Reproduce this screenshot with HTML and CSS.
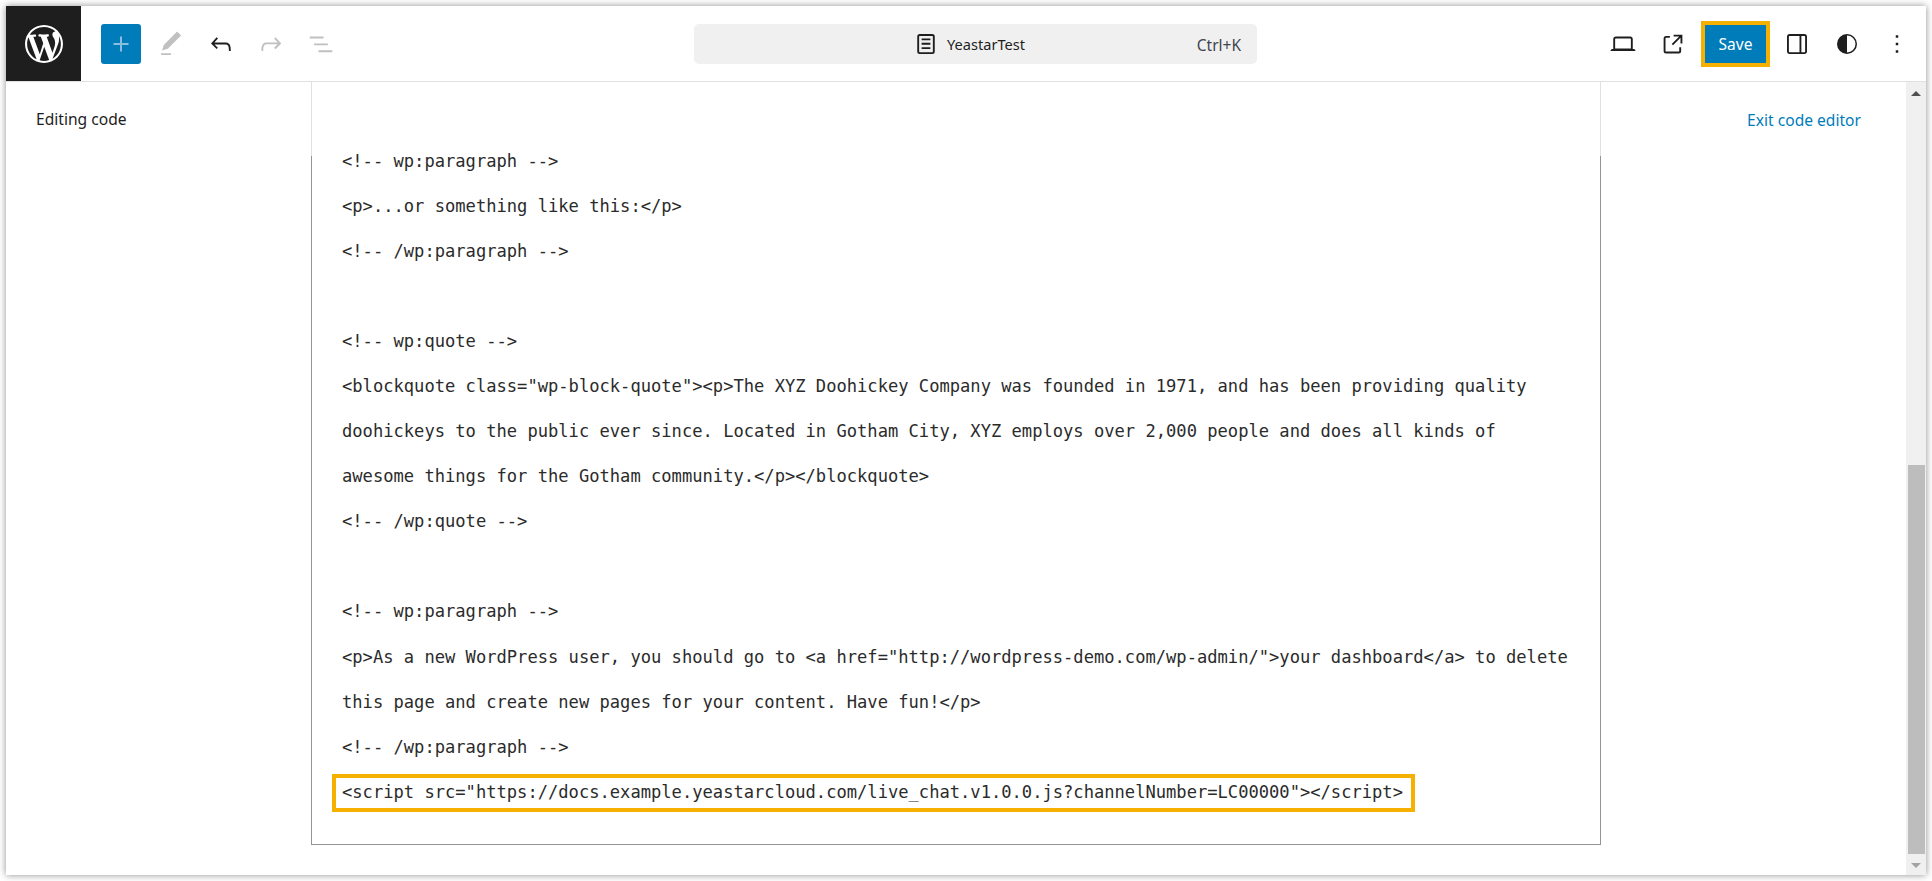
FILE: index.html
```html
<!DOCTYPE html>
<html lang="en">
<head>
<meta charset="utf-8">
<title>YeastarTest</title>
<link rel="stylesheet" href="styles.css">
</head>
<body>
<div class="window">
  <header class="topbar">
    <div class="logo"><svg viewBox="0 0 20 20" width="38" height="38"><path fill="#fff" d="M20 10c0-5.51-4.49-10-10-10C4.48 0 0 4.49 0 10c0 5.52 4.48 10 10 10 5.51 0 10-4.48 10-10zM7.78 15.37L4.37 6.22c.55-.02 1.17-.08 1.17-.08.5-.06.44-1.13-.06-1.11 0 0-1.45.11-2.37.11-.18 0-.37 0-.58-.01C4.12 2.69 6.87 1.11 10 1.11c2.33 0 4.45.87 6.05 2.34-.68-.11-1.65.39-1.65 1.58 0 .74.45 1.36.9 2.1.35.61.55 1.36.55 2.46 0 1.49-1.4 5-1.4 5l-3.03-8.37c.54-.02.82-.17.82-.17.5-.05.44-1.25-.06-1.22 0 0-1.44.12-2.38.12-.87 0-2.33-.12-2.33-.12-.5-.03-.56 1.2-.06 1.22l.92.08 1.26 3.41zM17.41 10c.24-.64.74-1.87.43-4.25.7 1.29 1.05 2.71 1.05 4.25 0 3.29-1.73 6.24-4.4 7.78.97-2.59 1.94-5.2 2.92-7.78zM6.1 18.09C3.12 16.65 1.11 13.53 1.11 10c0-1.3.23-2.48.72-3.59C3.25 10.3 4.67 14.2 6.1 18.09zm4.03-6.63l2.58 6.98c-.86.29-1.76.45-2.71.45-.79 0-1.57-.11-2.29-.33.81-2.38 1.62-4.74 2.42-7.1z"/></svg></div>
    <div class="tools-left">
      <button class="inserter"><svg class="ico" viewBox="0 0 24 24"><path d="M18 11.2h-5.2V6h-1.6v5.2H6v1.6h5.2V18h1.6v-5.2H18z"/></svg></button>
      <span class="tool muted"><svg class="ico" viewBox="0 0 24 24"><path d="M20.1 5.1L16.9 2 6.2 12.7l-1.3 4.4 4.5-1.3L20.1 5.1zM4 20.8h8v-1.5H4v1.5z"/></svg></span>
      <span class="tool"><svg class="ico" viewBox="0 0 24 24"><path d="M18.3 11.7c-.6-.6-1.4-.9-2.3-.9H6.7l2.9-3.3-1.1-1-4.5 5L8.5 16l1-1-2.7-2.7H16c.5 0 .9.2 1.3.5 1 1 1 3.4 1 4.5v.3h1.5v-.2c0-1.5 0-4.3-1.5-5.7z"/></svg></span>
      <span class="tool muted"><svg class="ico" viewBox="0 0 24 24"><path d="M15.6 6.5l-1.1 1 2.9 3.3H8c-.9 0-1.7.3-2.3.9-1.4 1.5-1.4 4.2-1.4 5.6v.2h1.5v-.3c0-1.1 0-3.5 1-4.5.3-.3.7-.5 1.3-.5h9.2L14.5 15l1.1 1.1 4.6-4.6-4.6-5z"/></svg></span>
      <span class="tool muted"><svg class="ico" viewBox="0 0 24 24"><path d="M3 6h11v1.5H3V6zm3.5 5.5h11V13h-11v-1.5zM21 17H10v1.5h11V17z"/></svg></span>
    </div>
    <div class="center-slot">
      <div class="command">
        <div class="doc-title">
          <svg class="ico" viewBox="0 0 24 24"><path d="M15.5 7.5h-7V9h7V7.5Zm-7 3.5h7v1.5h-7V11Zm7 3.5h-7V16h7v-1.5Z"/><path fill-rule="evenodd" d="M17 4H7a2 2 0 0 0-2 2v12a2 2 0 0 0 2 2h10a2 2 0 0 0 2-2V6a2 2 0 0 0-2-2Zm0 1.5H7a.5.5 0 0 0-.5.5v12a.5.5 0 0 0 .5.5h10a.5.5 0 0 0 .5-.5V6a.5.5 0 0 0-.5-.5Z"/></svg>
          <span>YeastarTest</span>
        </div>
        <span class="shortcut">Ctrl+K</span>
      </div>
    </div>
    <div class="tools-right">
      <span class="tool"><svg class="ico" viewBox="0 0 24 24"><path d="M20.5 16h-.7V8c0-1.1-.9-2-2-2H6.2c-1.1 0-2 .9-2 2v8h-.7c-.8 0-1.5.7-1.5 1.5h20c0-.8-.7-1.5-1.5-1.5zM5.7 8c0-.3.2-.5.5-.5h11.6c.3 0 .5.2.5.5v7.6H5.7V8z"/></svg></span>
      <span class="tool"><svg class="ico" viewBox="0 0 24 24"><path d="M19.5 4.5h-7V6h4.44l-5.97 5.97 1.06 1.06L18 7.06v4.44h1.5v-7Zm-13 1a2 2 0 0 0-2 2v10a2 2 0 0 0 2 2h10a2 2 0 0 0 2-2v-3H17v3a.5.5 0 0 1-.5.5h-10a.5.5 0 0 1-.5-.5v-10a.5.5 0 0 1 .5-.5h3V5.5h-3Z"/></svg></span>
      <button class="save">Save</button>
      <span class="tool"><svg class="ico" viewBox="0 0 24 24"><path d="M18 4H6c-1.1 0-2 .9-2 2v12c0 1.1.9 2 2 2h12c1.1 0 2-.9 2-2V6c0-1.1-.9-2-2-2zm-4 14.5H6c-.3 0-.5-.2-.5-.5V6c0-.3.2-.5.5-.5h8v13zm4.5-.5c0 .3-.2.5-.5.5h-2.5v-13H18c.3 0 .5.2.5.5v12z"/></svg></span>
      <span class="tool"><svg class="ico" viewBox="0 0 24 24"><path fill-rule="evenodd" d="M12 4a8 8 0 1 0 0 16 8 8 0 0 0 0-16Zm0 1.2a6.8 6.8 0 0 1 0 13.6V5.2Z"/></svg></span>
      <span class="tool"><svg class="ico" viewBox="0 0 24 24"><path d="M13 19h-2v-2h2v2zm0-6h-2v-2h2v2zm0-6h-2V5h2v2z"/></svg></span>
    </div>
  </header>
  <div class="main">
    <div class="canvas">
      <div class="code-bar">
        <span class="editing">Editing code</span>
        <div class="bar-center"></div>
        <a class="exit">Exit code editor</a>
      </div>
      <div class="code-box">
        <div class="code first">&lt;!-- wp:paragraph --&gt;</div>
        <div class="code">&lt;p&gt;...or something like this:&lt;/p&gt;</div>
        <div class="code">&lt;!-- /wp:paragraph --&gt;</div>
        <div class="code"></div>
        <div class="code">&lt;!-- wp:quote --&gt;</div>
        <div class="code">&lt;blockquote class="wp-block-quote"&gt;&lt;p&gt;The XYZ Doohickey Company was founded in 1971, and has been providing quality</div>
        <div class="code">doohickeys to the public ever since. Located in Gotham City, XYZ employs over 2,000 people and does all kinds of</div>
        <div class="code">awesome things for the Gotham community.&lt;/p&gt;&lt;/blockquote&gt;</div>
        <div class="code">&lt;!-- /wp:quote --&gt;</div>
        <div class="code"></div>
        <div class="code">&lt;!-- wp:paragraph --&gt;</div>
        <div class="code">&lt;p&gt;As a new WordPress user, you should go to &lt;a href="http://wordpress-demo.com/wp-admin/"&gt;your dashboard&lt;/a&gt; to delete</div>
        <div class="code">this page and create new pages for your content. Have fun!&lt;/p&gt;</div>
        <div class="code">&lt;!-- /wp:paragraph --&gt;</div>
        <div class="code"><span class="mark">&lt;script src="https://docs.example.yeastarcloud.com/live_chat.v1.0.0.js?channelNumber=LC00000"&gt;&lt;/script&gt;</span></div>
      </div>
    </div>
    <div class="scrollbar">
      <span class="arrow up"></span>
      <div class="track"><div class="thumb"></div></div>
      <span class="arrow down"></span>
    </div>
  </div>
</div>
</body>
</html>
```

FILE: styles.css
```css
* { box-sizing: border-box; }
html, body { margin: 0; height: 100%; background: #fff; overflow: hidden; }
body {
  padding: 6px 6px 6px 6px;
  font-family: "Noto Sans", "Open Sans", sans-serif;
  color: #1e1e1e;
}
.window {
  height: 869px;
  display: flex;
  flex-direction: column;
  background: #fff;
  box-shadow: 0 0 7px rgba(0, 0, 0, .45);
}
.topbar {
  height: 76px;
  flex: none;
  display: flex;
  align-items: center;
  border-bottom: 1px solid #e0e0e0;
}
.logo {
  width: 75px;
  height: 75px;
  background: #1e1e1e;
  display: flex;
  align-items: center;
  justify-content: center;
  flex: none;
}
.ico { width: 30px; height: 30px; fill: currentColor; display: block; flex: none; }
.tools-left { display: flex; align-items: center; margin-left: 20px; width: 593px; flex: none; }
.inserter {
  width: 40px;
  height: 40px;
  border: 0;
  padding: 0;
  border-radius: 3px;
  background: #007cba;
  color: #86c0de;
  display: flex;
  align-items: center;
  justify-content: center;
  margin-right: 5px;
}
.tool { width: 50px; height: 40px; display: flex; align-items: center; justify-content: center; color: #1e1e1e; flex: none; }
.tool.muted { color: #c0c0c0; }
.center-slot { width: 563px; flex: none; }
.command {
  height: 40px;
  border-radius: 5px;
  background: #f0f0f0;
  position: relative;
  display: flex;
  align-items: center;
  justify-content: center;
  padding-right: 15px;
  font-size: 14.6px;
}
.doc-title { display: flex; align-items: center; gap: 6px; }
.shortcut { position: absolute; right: 16px; top: 10px; color: #40464d; font-size: 15.5px; }
.tools-right { flex: 1; display: flex; align-items: center; justify-content: flex-end; padding-right: 4px; }
.save {
  width: 69px;
  height: 46px;
  margin: 0 2px 0 3px;
  background: #007cba;
  border: 4px solid #f5b000;
  color: #fff;
  font: 15.5px "Noto Sans", sans-serif;
  padding: 0;
}
.main { flex: 1; min-height: 0; display: flex; }
.canvas { flex: 1; min-width: 0; }
.code-bar {
  height: 74px;
  display: grid;
  grid-template-columns: 305px 1290px 1fr;
  font-size: 15.6px;
}
.editing { padding: 26px 0 0 30px; }
.bar-center { border-left: 1px solid #e0e0e0; border-right: 1px solid #e0e0e0; }
.exit { padding: 27px 45px 0 0; text-align: right; color: #007cba; }
.code-box {
  display: flow-root;
  width: 1290px;
  height: 689px;
  margin-left: 305px;
  padding: 0 30px;
  border: 1px solid #949494;
  border-top: 0;
  font: 17.12px/45.1px "DejaVu Sans Mono", monospace;
  color: #2b2b2b;
}
.code { height: 45.1px; white-space: pre; }
.code.first { margin-top: -17.5px; }
.mark {
  display: inline-block;
  margin-left: -10px;
  margin-top: 4px;
  padding: 0 8px 1px 6px;
  border: 4px solid #f5b000;
  line-height: 29px;
  vertical-align: top;
}
.scrollbar {
  width: 20px;
  flex: none;
  background: #f0f0f0;
  display: flex;
  flex-direction: column;
  align-items: center;
}
.arrow { width: 0; height: 0; border-left: 5px solid transparent; border-right: 5px solid transparent; flex: none; }
.arrow.up { border-bottom: 5px solid #505050; margin: 9px 0 6px; }
.arrow.down { border-top: 5px solid #a3a3a3; margin: 9px 0 7px; }
.track { flex: 1; width: 17px; display: flex; flex-direction: column; justify-content: flex-end; }
.thumb { height: 389px; background: #bdbdbd; }
```
